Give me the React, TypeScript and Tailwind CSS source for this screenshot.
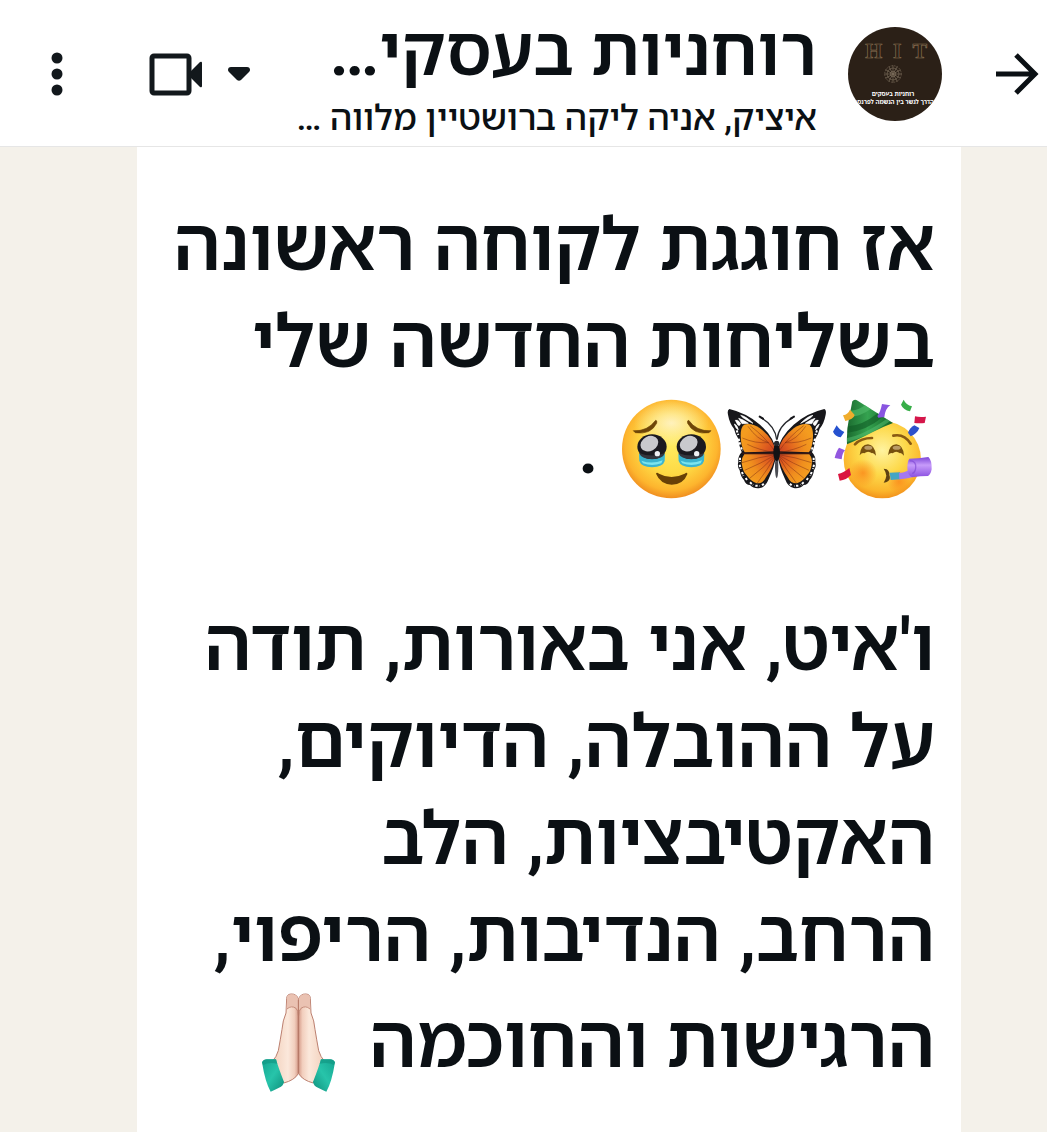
import type { ReactNode } from "react";

function Emoji({ label, viewBox, children }: { label: string; viewBox: string; children: ReactNode }) {
  return (
    <svg
      role="img"
      aria-label={label}
      viewBox={viewBox}
      className="inline-block size-[100px] mt-[8px] mr-[2px] ml-[4px] align-[-26px]"
    >
      {children}
    </svg>
  );
}

function PartyFace() {
  return (
    <Emoji label="Partying face" viewBox="38 24 300 300">
      <defs>
        <radialGradient id="partySkin" cx="0.5" cy="0.38" r="0.62">
          <stop offset="0" stopColor="#fff3a0" />
          <stop offset="0.5" stopColor="#fdd94a" />
          <stop offset="0.85" stopColor="#fbb52c" />
          <stop offset="1" stopColor="#f2931c" />
        </radialGradient>
        <radialGradient id="partyCheek">
          <stop offset="0" stopColor="#fb8c1c" stopOpacity="0.85" />
          <stop offset="1" stopColor="#fb8c1c" stopOpacity="0" />
        </radialGradient>
        <linearGradient id="partyHat" x1="0" x2="1">
          <stop offset="0" stopColor="#1b6b2f" />
          <stop offset="0.45" stopColor="#35a350" />
          <stop offset="1" stopColor="#136327" />
        </linearGradient>
        <linearGradient id="partyHorn" x1="0" y1="0" x2="0" y2="1">
          <stop offset="0" stopColor="#7d45d8" />
          <stop offset="0.4" stopColor="#c79bfa" />
          <stop offset="1" stopColor="#8a4fe0" />
        </linearGradient>
      </defs>
      <circle cx="186" cy="206" r="116" fill="url(#partySkin)" />
      <circle cx="128" cy="246" r="42" fill="url(#partyCheek)" />
      <circle cx="236" cy="272" r="36" fill="url(#partyCheek)" />
      <path d="M96 31 Q102 22 112 29 L218 96 Q188 107 156 124 Q112 147 80 160 Q78 120 86 82 Z" fill="url(#partyHat)" />
      <path d="M91 58 Q112 60 134 43 L151 54 Q122 76 87 78 Z" fill="#4db866" opacity="0.7" />
      <path d="M83 106 Q126 104 172 67 L188 77 Q138 119 81 125 Z" fill="#0f5a24" opacity="0.6" />
      <path d="M80 141 Q130 132 199 84 L209 91 Q140 139 80 153 Z" fill="#58c172" opacity="0.5" />
      <path d="M104 160 Q122 141 155 141" fill="none" stroke="#8a5a12" strokeWidth="8" strokeLinecap="round" />
      <path d="M219 134 Q251 127 271 158" fill="none" stroke="#8a5a12" strokeWidth="8" strokeLinecap="round" />
      <path d="M118 193 Q121 160 143 160 Q164 162 167 194 Q158 184 155 187 Q143 177 132 187 Q125 184 118 193 Z" fill="#76500f" />
      <path d="M203 193 Q206 160 228 160 Q249 162 251 194 Q242 184 239 187 Q227 177 217 187 Q210 184 203 193 Z" fill="#76500f" />
      <ellipse cx="144" cy="170" rx="12" ry="6" fill="#b99a67" />
      <ellipse cx="229" cy="170" rx="12" ry="6" fill="#b99a67" />
      <path d="M190 233 L199 235 Q209 243 207 252 Q212 263 203 271 Q198 275 190 275 Q197 264 198 254 Q197 243 190 233 Z" fill="#5f4211" />
      <path d="M208 245 L239 244 L240 265 L211 267 Z" fill="#45a5c4" />
      <path d="M236 246 Q262 243 275 230 L292 252 Q268 263 237 265 Z" fill="#a578f0" />
      <path d="M267 203 Q294 203 324 198 Q335 208 334 235 Q331 251 323 255 Q300 255 275 259 Q262 253 261 231 Q261 211 267 203 Z" fill="url(#partyHorn)" />
      <path d="M268 210 Q282 208 286 222 Q288 242 276 248" fill="none" stroke="#7a42d0" strokeWidth="4" opacity="0.6" />
      <path d="M68 73 Q83 70 89 56 L103 72 Q99 86 75 90 Z" fill="#f0ad2d" />
      <path d="M171 75 Q180 64 185 39 L210 43 Q195 52 192 78 L174 80 Z" fill="#8855e0" />
      <path d="M250 26 Q257 42 275 46 L269 61 Q249 57 242 41 Z" fill="#37ae48" />
      <path d="M284 76 Q299 80 317 77 L313 96 Q298 98 282 96 Z" fill="#d5164a" />
      <path d="M282 103 L297 111 Q291 127 271 136 L263 125 Q269 110 282 103 Z" fill="#2d51cc" />
      <path d="M49 103 Q57 117 72 123 L61 139 Q44 136 38 122 Z" fill="#2551cf" />
      <path d="M56 170 L74 178 Q66 185 64 205 L43 201 Q48 180 56 170 Z" fill="#9257df" />
      <path d="M53 249 Q69 246 87 231 L92 252 Q78 267 58 269 Z" fill="#da143f" />
    </Emoji>
  );
}

// one wing, mirrored for the other side
function Wing() {
  return (
    <g>
      <path
        d="M183 183 Q178 140 134 101 Q94 66 42 54 Q35 58 38 71 Q43 98 56 113 Q60 130 69 143 Q70 160 79 184 Q67 196 69 213 Q65 226 73 238 Q76 258 86 267 Q91 282 104 282 Q116 294 134 291 Q151 288 160 264 Q176 231 183 193 Z"
        fill="#17171b"
      />
      <path d="M181 181 Q174 142 133 111 Q107 94 86 101 Q76 109 76 133 Q76 166 88 184 Z" fill="url(#wingFill)" />
      <path d="M181 190 L87 190 Q76 204 80 222 Q83 243 94 253 Q106 271 124 277 Q143 278 151 260 Q174 230 181 190 Z" fill="url(#wingFill)" />
      <path
        d="M180 183 Q150 138 104 104 M160 155 Q125 146 98 106 M160 155 Q120 158 81 141 M180 185 Q130 177 96 160 M180 191 Q130 198 80 215 M180 192 Q135 218 88 238 M180 193 Q145 230 103 262 M180 194 Q159 233 126 276"
        fill="none"
        stroke="#7a2a14"
        strokeWidth="2"
        opacity="0.7"
      />
      <path d="M81 187 H180" stroke="#3a1712" strokeWidth="4" />
      <path
        d="M76 73 Q91 75 113 97 Q96 89 83 80 Z M70 82 Q82 85 99 97 L80 98 Z M60 88 Q66 84 76 97 Q73 108 67 101 Z M57 99 Q66 102 69 116 Q62 115 57 99 Z"
        fill="#fff"
        stroke="#fff"
        strokeWidth="2"
      />
      <path
        d="M64 118 L69 132 M70 143 L75 164 M77 169 L81 180 M74 200 V213 M73 221 L76 234 M80 243 L84 255 M91 261 L97 270 M104 274 L113 282 M120 284 L132 285 M140 283 L149 276"
        fill="none"
        stroke="#fff"
        strokeWidth="6"
        strokeDasharray="7 4"
      />
      <path d="M184 146 Q180 105 137 80" fill="none" stroke="#26282d" strokeWidth="4" />
      <path d="M133 77 L143 83" stroke="#17171b" strokeWidth="6" strokeLinecap="round" />
    </g>
  );
}

function Butterfly() {
  return (
    <Emoji label="Butterfly" viewBox="35 24 300 300">
      <defs>
        <radialGradient id="wingFill" gradientUnits="userSpaceOnUse" cx="183" cy="184" r="110">
          <stop offset="0" stopColor="#c43a20" />
          <stop offset="0.35" stopColor="#e0601f" />
          <stop offset="0.75" stopColor="#f08f1e" />
          <stop offset="1" stopColor="#f49c1f" />
        </radialGradient>
      </defs>
      <Wing />
      <g transform="translate(369 0) scale(-1 1)">
        <Wing />
      </g>
      <ellipse cx="184" cy="228" rx="5" ry="34" fill="#4a4c52" />
      <ellipse cx="184" cy="184" rx="10" ry="26" fill="#121215" />
      <circle cx="184" cy="157" r="8" fill="#26282d" />
    </Emoji>
  );
}

function TearyEye() {
  return (
    <g>
      <path d="M207 190 Q246 214 285 190 L284 212 Q279 230 246 231 Q213 229 208 212 Z" fill="#3bb4cf" />
      <path d="M214 211 Q246 223 278 210 L274 219 Q246 229 219 219 Z" fill="#7ce4ee" />
      <ellipse cx="246" cy="169" rx="44" ry="37" fill="#1b1a20" />
      <path d="M207 188 Q246 203 285 188 Q279 205 246 207 Q214 205 207 188 Z" fill="#34353d" />
      <ellipse cx="238" cy="160" rx="28" ry="22" fill="#c9c9cd" transform="rotate(-28 238 160)" />
      <circle cx="262" cy="190" r="8" fill="#f1f1f4" />
    </g>
  );
}

function HoldingTears() {
  return (
    <Emoji label="Face holding back tears" viewBox="153 26 300 300">
      <defs>
        <radialGradient id="tearSkin" cx="0.5" cy="0.45" r="0.55">
          <stop offset="0" stopColor="#ffec60" />
          <stop offset="0.55" stopColor="#fed944" />
          <stop offset="0.85" stopColor="#fdb52e" />
          <stop offset="1" stopColor="#f08e20" />
        </radialGradient>
        <radialGradient id="tearShine">
          <stop offset="0" stopColor="#fff6d8" stopOpacity="0.8" />
          <stop offset="1" stopColor="#fff6d8" stopOpacity="0" />
        </radialGradient>
      </defs>
      <circle cx="304" cy="176" r="148" fill="url(#tearSkin)" />
      <ellipse cx="304" cy="98" rx="112" ry="70" fill="url(#tearShine)" />
      <path d="M190 121 Q232 124 257 90 Q262 90 260 99 Q242 134 196 127 Z" fill="#6f4608" stroke="#6f4608" strokeWidth="2" />
      <path d="M423 121 Q380 124 356 90 Q351 90 353 99 Q371 134 417 127 Z" fill="#6f4608" stroke="#6f4608" strokeWidth="2" />
      <TearyEye />
      <g transform="translate(118 0)">
        <TearyEye />
      </g>
      <path d="M258 250 Q260 244 267 250 Q304 270 344 250 Q353 244 352 252 Q340 283 305 283 Q271 281 258 250 Z" fill="#684006" />
    </Emoji>
  );
}

function Hand() {
  return (
    <g>
      <path
        d="M171 54 Q166 38 149 39 Q136 40 136 53 L134 96 Q124 119 122 145 Q117 176 111 209 Q105 229 93 241 L127 306 Q159 298 171 278 Z"
        fill="url(#handFill)"
        stroke="#bc8070"
        strokeWidth="3"
      />
      <path d="M136 84 Q149 70 166 83 Q171 91 171 108 V54 Q166 39 149 40 Q137 41 137 53 Z" fill="#eac2b2" />
      <path d="M137 84 Q150 72 164 82 Q171 88 171 104" fill="none" stroke="#c58b7a" strokeWidth="3" />
      <path d="M62 244 Q67 234 79 235 L104 235 Q111 260 128 303 Q126 315 113 320 Q97 328 88 332 Q72 306 62 244 Z" fill="url(#cuffFill)" />
      <path d="M62 244 Q67 234 79 235 L104 235 L108 248 Q83 242 65 252 Z" fill="#139984" opacity="0.7" />
    </g>
  );
}

function PrayingHands() {
  return (
    <Emoji label="Folded hands" viewBox="23 36 300 300">
      <defs>
        <linearGradient id="handFill" x1="0" x2="1">
          <stop offset="0.2" stopColor="#f5d8c6" />
          <stop offset="0.6" stopColor="#fbe8db" />
          <stop offset="0.85" stopColor="#f2cfbe" />
          <stop offset="1" stopColor="#d79e8c" />
        </linearGradient>
        <linearGradient id="cuffFill" x1="0" y1="0" x2="1" y2="1">
          <stop offset="0" stopColor="#15a590" />
          <stop offset="0.5" stopColor="#27c4aa" />
          <stop offset="1" stopColor="#0f8f7b" />
        </linearGradient>
      </defs>
      <Hand />
      <g transform="translate(343 0) scale(-1 1)">
        <Hand />
      </g>
      <path d="M171 56 V277" stroke="#b57866" strokeWidth="3" />
    </Emoji>
  );
}

function Avatar() {
  const spokes = [0, 30, 60, 90, 120, 150];
  return (
    <svg viewBox="84 80 284 284" className="size-[94px] shrink-0 rounded-full bg-[#2b2017]" role="img" aria-label="HIT">
      <g fill="none" stroke="#8a7052" strokeWidth="2" fontFamily="Liberation Serif, serif" fontWeight="700" fontSize="66" textAnchor="middle">
        <text x="162" y="174">H</text>
        <text x="233" y="174">I</text>
        <text x="301" y="174">T</text>
      </g>
      <g fill="none" stroke="#7d6f5d" strokeWidth="2">
        <circle cx="220" cy="222" r="25" strokeDasharray="5 3" />
        <circle cx="220" cy="222" r="18" />
        <circle cx="220" cy="222" r="8" />
        {spokes.map((a) => (
          <path key={a} d="M220 196 V248" transform={`rotate(${a} 220 222)`} />
        ))}
      </g>
      <g fill="#fff" fontFamily="Noto Sans Hebrew, Open Sans, sans-serif" fontWeight="700" textAnchor="middle" direction="rtl">
        <text x="220" y="289" fontSize="18">רוחניות בעסקים</text>
        <text x="222" y="312" fontSize="18">הדרך לגשר בין הנשמה לפרנסה</text>
      </g>
    </svg>
  );
}

function Header() {
  return (
    <header className="flex h-[147px] items-center border-b border-[#e6e6e6] bg-white pt-px pr-2 pl-[51px]">
      <button aria-label="חזרה" className="shrink-0">
        <svg viewBox="0 0 44 44" className="size-11" fill="none" stroke="#0b1014" strokeWidth="5">
          <path d="M1 22H40M21 3l19 19L21 41" />
        </svg>
      </button>
      <div className="mr-[53px] flex">
        <Avatar />
      </div>
      <div className="mr-[31px] min-w-0 flex-1 pt-[6px] whitespace-nowrap">
        <h1 className="text-[69px] leading-[84px] font-semibold">רוחניות בעסקי…</h1>
        <p className="text-[35px] leading-[50px] font-medium">איציק, אניה ליקה ברושטיין מלווה …</p>
      </div>
      <button aria-label="שיחת וידאו" className="flex shrink-0 items-center">
        <svg viewBox="0 0 22 14" className="h-[14px] w-[22px]" fill="#12181c">
          <path d="M3 0h16q3 0 3 3 0 1-1 2l-8 8q-2 1.500-4 0L1 5Q0 4 0 3q0-3 3-3z" />
        </svg>
        <svg viewBox="0 0 54 44" className="mr-[25px] h-11 w-[54px]" fill="#12181c">
          <rect x="3" y="4" width="37" height="37" rx="2" fill="none" stroke="#12181c" strokeWidth="5" />
          <path d="M41 20l10-10q2-1 2 1v23q0 2-2 1L41 25z" />
        </svg>
      </button>
      <button aria-label="אפשרויות נוספות" className="mr-[86px] shrink-0">
        <svg viewBox="0 0 12 44" className="h-11 w-3" fill="#12181c">
          <circle cx="6" cy="6" r="5.500" />
          <circle cx="6" cy="22" r="5.500" />
          <circle cx="6" cy="38" r="5.500" />
        </svg>
      </button>
    </header>
  );
}

export default function App() {
  return (
    <div
      dir="rtl"
      className="flex min-h-screen flex-col bg-[#f4f1ea] font-['Roboto','Noto_Sans_Hebrew','Open_Sans',sans-serif] text-[#0b1014]"
    >
      <Header />
      <main className="mr-[86px] ml-[137px] flex-1 bg-white px-[26px] pt-[50px] text-[73px] leading-[97px] font-semibold">
        <p>
          אז חוגגת לקוחה ראשונה
          <br />
          בשליחות החדשה שלי
          <br />
          <PartyFace />
          <Butterfly />
          <HoldingTears /> .
        </p>
        <p className="mt-[98px]">
          ו'איט, אני באורות, תודה
          <br />
          על ההובלה, הדיוקים,
          <br />
          האקטיבציות, הלב
          <br />
          הרחב, הנדיבות, הריפוי,
          <br />
          הרגישות והחוכמה <PrayingHands />
        </p>
      </main>
    </div>
  );
}
